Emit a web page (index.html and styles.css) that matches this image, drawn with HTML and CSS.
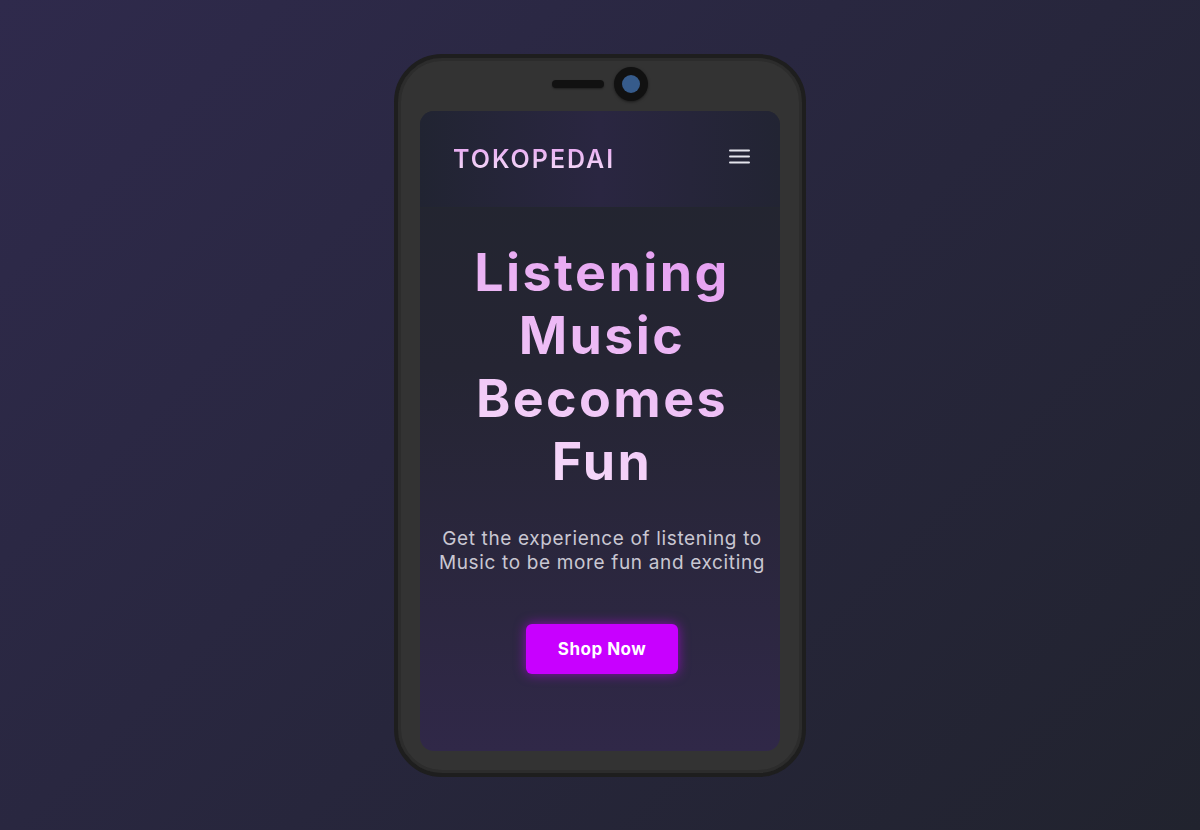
FILE: index.html
```html
<!DOCTYPE html>
<html lang="en">
<head>
<meta charset="utf-8">
<title>Tokopedai</title>
<link rel="stylesheet" href="styles.css">
</head>
<body>
<div class="phone">
  <div class="notch">
    <span class="speaker"></span>
    <span class="camera"><span class="lens"></span></span>
  </div>
  <div class="screen">
    <header class="topbar">
      <div class="brand">TOKOPEDAI</div>
      <button class="menu" aria-label="Menu">
        <svg width="21" height="15" viewBox="0 0 21 15"><rect x="0" y="0.5" width="21" height="2" rx="1" fill="#e4e4ec"/><rect x="0" y="6.5" width="21" height="2" rx="1" fill="#e4e4ec"/><rect x="0" y="12.5" width="21" height="2" rx="1" fill="#e4e4ec"/></svg>
      </button>
    </header>
    <main class="hero">
      <h1 class="title">Listening Music Becomes Fun</h1>
      <p class="lead">Get the experience of listening to Music to be more fun and exciting</p>
      <a class="cta" href="#">Shop Now</a>
    </main>
  </div>
</div>
</body>
</html>
```
FILE: styles.css
```css
* { box-sizing: border-box; }
html, body { height: 100%; }
body {
  margin: 0;
  display: flex;
  align-items: center;
  justify-content: center;
  background: linear-gradient(135deg, #2f2a4c 0%, #27263c 55%, #21232e 100%);
  font-family: "Inter", "DejaVu Sans", sans-serif;
}
.phone {
  width: 412px;
  height: 723px;
  border: 4px solid #1e1e1e;
  border-radius: 48px;
  background: #333333;
  box-shadow: inset 0 0 0 3px #2c2c2c;
  padding: 0 22px 22px;
  display: flex;
  flex-direction: column;
}
.notch {
  height: 53px;
  display: flex;
  align-items: center;
  justify-content: center;
  gap: 10px;
}
.speaker {
  width: 52px;
  height: 8px;
  border-radius: 4px;
  background: #111;
  box-shadow: 0 1px 2px rgba(0,0,0,0.4);
}
.camera {
  width: 34px;
  height: 34px;
  border-radius: 50%;
  background: #111;
  box-shadow: 0 1px 3px rgba(0,0,0,0.5);
  display: flex;
  align-items: center;
  justify-content: center;
}
.lens {
  width: 18px;
  height: 18px;
  border-radius: 50%;
  background: #365b8b;
}
.screen {
  flex: 1;
  border-radius: 14px;
  overflow: hidden;
  background: linear-gradient(180deg, #22252f 0%, #252533 40%, #302848 100%);
  display: flex;
  flex-direction: column;
}
.topbar {
  height: 97px;
  flex: none;
  display: flex;
  align-items: center;
  justify-content: space-between;
  padding: 0 30px 0 33px;
  background: linear-gradient(90deg, #212432 0%, #2a2641 50%, #222433 100%);
  border-bottom: 1px solid #23262f;
}
.brand {
  font-size: 25px;
  font-weight: 600;
  letter-spacing: 2px;
  background: linear-gradient(180deg, #e6a2f0 0%, #f6e2f9 100%);
  -webkit-background-clip: text;
  background-clip: text;
  color: transparent;
}
.menu {
  background: none;
  border: 0;
  padding: 0;
  margin-top: -4px;
  display: flex;
}
.hero {
  display: flex;
  flex-direction: column;
  align-items: center;
  text-align: center;
  padding: 33px 0 0 4px;
}
.title {
  margin: 0;
  width: 320px;
  font-size: 52px;
  font-weight: 700;
  letter-spacing: 2.4px;
  line-height: 63.3px;
  background: linear-gradient(200deg, #e398f0 0%, #f9e4fb 100%);
  -webkit-background-clip: text;
  background-clip: text;
  color: transparent;
}
.lead {
  margin: 33px 0 0;
  max-width: 344px;
  font-size: 19px;
  letter-spacing: 0.65px;
  line-height: 24px;
  color: #c9c7d2;
}
.cta {
  margin-top: 49px;
  width: 152px;
  height: 50px;
  display: flex;
  align-items: center;
  justify-content: center;
  border-radius: 6px;
  background: #c800ff;
  color: #fff;
  font-weight: 700;
  font-size: 17px;
  letter-spacing: 0.5px;
  text-decoration: none;
  box-shadow: 0 0 12px rgba(200, 0, 255, 0.6);
}
```
